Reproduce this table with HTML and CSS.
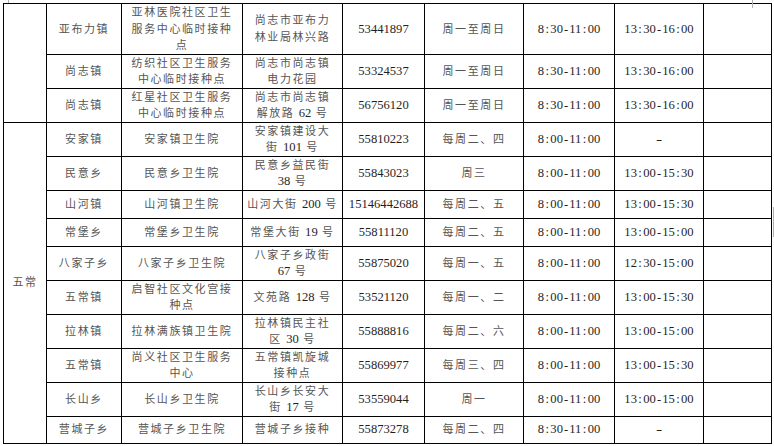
FILE: index.html
```html
<!DOCTYPE html>
<html lang="zh">
<head>
<meta charset="utf-8">
<title>接种点</title>
<link rel="stylesheet" href="styles.css">
</head>
<body>
<div class="page">
  <div class="mark mark-tl"></div>
  <div class="mark mark-tr"></div>
  <div class="mark mark-r"></div>
  <table class="grid">
    <colgroup>
      <col class="c1"><col class="c2"><col class="c3"><col class="c4"><col class="c5"><col class="c6"><col class="c7"><col class="c8"><col class="c9">
    </colgroup>
    <tbody>
      <tr class="r50">
        <td rowspan="3"></td>
        <td>亚布力镇</td>
        <td>亚林医院社区卫生<br>服务中心临时接种<br>点</td>
        <td>尚志市亚布力<br>林业局林兴路</td>
        <td><span class="n">53441897</span></td>
        <td>周一至周日</td>
        <td><span class="t">8<span class="p">:</span>30<span class="p">-</span>11<span class="p">:</span>00</span></td>
        <td><span class="t">13<span class="p">:</span>30<span class="p">-</span>16<span class="p">:</span>00</span></td>
        <td></td>
      </tr>
      <tr class="r34">
        <td>尚志镇</td>
        <td>纺织社区卫生服务<br>中心临时接种点</td>
        <td>尚志市尚志镇<br>电力花园</td>
        <td><span class="n">53324537</span></td>
        <td>周一至周日</td>
        <td><span class="t">8<span class="p">:</span>30<span class="p">-</span>11<span class="p">:</span>00</span></td>
        <td><span class="t">13<span class="p">:</span>30<span class="p">-</span>16<span class="p">:</span>00</span></td>
        <td></td>
      </tr>
      <tr class="r34">
        <td>尚志镇</td>
        <td>红星社区卫生服务<br>中心临时接种点</td>
        <td>尚志市尚志镇<br>解放路 <span class="n">62</span> 号</td>
        <td><span class="n">56756120</span></td>
        <td>周一至周日</td>
        <td><span class="t">8<span class="p">:</span>30<span class="p">-</span>11<span class="p">:</span>00</span></td>
        <td><span class="t">13<span class="p">:</span>30<span class="p">-</span>16<span class="p">:</span>00</span></td>
        <td></td>
      </tr>
      <tr class="r34">
        <td rowspan="10">五常</td>
        <td>安家镇</td>
        <td>安家镇卫生院</td>
        <td>安家镇建设大<br>街 <span class="n">101</span> 号</td>
        <td><span class="n">55810223</span></td>
        <td>每周二、四</td>
        <td><span class="t">8<span class="p">:</span>00<span class="p">-</span>11<span class="p">:</span>00</span></td>
        <td><span class="t"><span class="p dash">-</span></span></td>
        <td></td>
      </tr>
      <tr class="r34">
        <td>民意乡</td>
        <td>民意乡卫生院</td>
        <td>民意乡益民街<br><span class="n">38</span> 号</td>
        <td><span class="n">55843023</span></td>
        <td>周三</td>
        <td><span class="t">8<span class="p">:</span>00<span class="p">-</span>11<span class="p">:</span>00</span></td>
        <td><span class="t">13<span class="p">:</span>00<span class="p">-</span>15<span class="p">:</span>30</span></td>
        <td></td>
      </tr>
      <tr class="r28">
        <td>山河镇</td>
        <td>山河镇卫生院</td>
        <td>山河大街 <span class="n">200</span> 号</td>
        <td><span class="n">15146442688</span></td>
        <td>每周二、五</td>
        <td><span class="t">8<span class="p">:</span>00<span class="p">-</span>11<span class="p">:</span>00</span></td>
        <td><span class="t">13<span class="p">:</span>00<span class="p">-</span>15<span class="p">:</span>30</span></td>
        <td></td>
      </tr>
      <tr class="r28">
        <td>常堡乡</td>
        <td>常堡乡卫生院</td>
        <td>常堡大街 <span class="n">19</span> 号</td>
        <td><span class="n">55811120</span></td>
        <td>每周二、五</td>
        <td><span class="t">8<span class="p">:</span>00<span class="p">-</span>11<span class="p">:</span>00</span></td>
        <td><span class="t">13<span class="p">:</span>00<span class="p">-</span>15<span class="p">:</span>00</span></td>
        <td></td>
      </tr>
      <tr class="r34">
        <td>八家子乡</td>
        <td>八家子乡卫生院</td>
        <td>八家子乡政街<br><span class="n">67</span> 号</td>
        <td><span class="n">55875020</span></td>
        <td>每周一、五</td>
        <td><span class="t">8<span class="p">:</span>00<span class="p">-</span>11<span class="p">:</span>00</span></td>
        <td><span class="t">12<span class="p">:</span>30<span class="p">-</span>15<span class="p">:</span>00</span></td>
        <td></td>
      </tr>
      <tr class="r34">
        <td>五常镇</td>
        <td>启智社区文化宫接<br>种点</td>
        <td>文苑路 <span class="n">128</span> 号</td>
        <td><span class="n">53521120</span></td>
        <td>每周一、二</td>
        <td><span class="t">8<span class="p">:</span>00<span class="p">-</span>11<span class="p">:</span>00</span></td>
        <td><span class="t">13<span class="p">:</span>00<span class="p">-</span>15<span class="p">:</span>30</span></td>
        <td></td>
      </tr>
      <tr class="r34">
        <td>拉林镇</td>
        <td>拉林满族镇卫生院</td>
        <td>拉林镇民主社<br>区 <span class="n">30</span> 号</td>
        <td><span class="n">55888816</span></td>
        <td>每周二、六</td>
        <td><span class="t">8<span class="p">:</span>00<span class="p">-</span>11<span class="p">:</span>00</span></td>
        <td><span class="t">13<span class="p">:</span>00<span class="p">-</span>15<span class="p">:</span>00</span></td>
        <td></td>
      </tr>
      <tr class="r34">
        <td>五常镇</td>
        <td>尚义社区卫生服务<br>中心</td>
        <td>五常镇凯旋城<br>接种点</td>
        <td><span class="n">55869977</span></td>
        <td>每周三、四</td>
        <td><span class="t">8<span class="p">:</span>00<span class="p">-</span>11<span class="p">:</span>00</span></td>
        <td><span class="t">13<span class="p">:</span>00<span class="p">-</span>15<span class="p">:</span>30</span></td>
        <td></td>
      </tr>
      <tr class="r34">
        <td>长山乡</td>
        <td>长山乡卫生院</td>
        <td>长山乡长安大<br>街 <span class="n">17</span> 号</td>
        <td><span class="n">53559044</span></td>
        <td>周一</td>
        <td><span class="t">8<span class="p">:</span>00<span class="p">-</span>11<span class="p">:</span>00</span></td>
        <td><span class="t">13<span class="p">:</span>00<span class="p">-</span>15<span class="p">:</span>00</span></td>
        <td></td>
      </tr>
      <tr class="r27">
        <td>营城子乡</td>
        <td>营城子乡卫生院</td>
        <td>营城子乡接种</td>
        <td><span class="n">55873278</span></td>
        <td>每周二、四</td>
        <td><span class="t">8<span class="p">:</span>30<span class="p">-</span>11<span class="p">:</span>00</span></td>
        <td><span class="t"><span class="p dash">-</span></span></td>
        <td></td>
      </tr>
    </tbody>
  </table>
</div>
</body>
</html>
```

FILE: styles.css
```css
html, body {
  margin: 0;
  padding: 0;
  background: #ffffff;
}

.page {
  position: relative;
  width: 774px;
  height: 446px;
  box-sizing: border-box;
  padding: 3px 0 0 3px;
  overflow: hidden;
}

.mark {
  position: absolute;
  background: #b0b0b0;
  width: 1px;
}
.mark-tl { left: 8px; top: 0; height: 3px; }
.mark-tr { left: 752px; top: 0; height: 8px; }
.mark-r { left: 773px; top: 207px; height: 30px; }

.grid {
  border-collapse: collapse;
  table-layout: fixed;
  width: 769px;
  font-family: "Liberation Serif", "Noto Sans CJK SC", serif;
  font-size: 11px;
  letter-spacing: 1.6px;
  color: #555555;
}

.c1 { width: 43px; }
.c2 { width: 75px; }
.c3 { width: 121px; }
.c4 { width: 100px; }
.c5 { width: 82px; }
.c6 { width: 99px; }
.c7 { width: 91px; }
.c8 { width: 89px; }
.c9 { width: 68px; }

.grid td {
  border: 1px solid #000;
  padding: 0;
  text-align: center;
  vertical-align: middle;
  white-space: nowrap;
  line-height: 16.5px;
  overflow: hidden;
}

.r50 { height: 50px; }
.r34 { height: 34px; }
.r28 { height: 28px; }
.r27 { height: 27px; }

.n,
.t {
  font-family: "Liberation Serif", serif;
  font-size: 12.6px;
  letter-spacing: 0;
  color: #1f1f1f;
}

.p {
  display: inline-block;
  width: 6.3px;
  text-align: center;
}

.dash {
  transform: scaleX(1.5);
}
```
